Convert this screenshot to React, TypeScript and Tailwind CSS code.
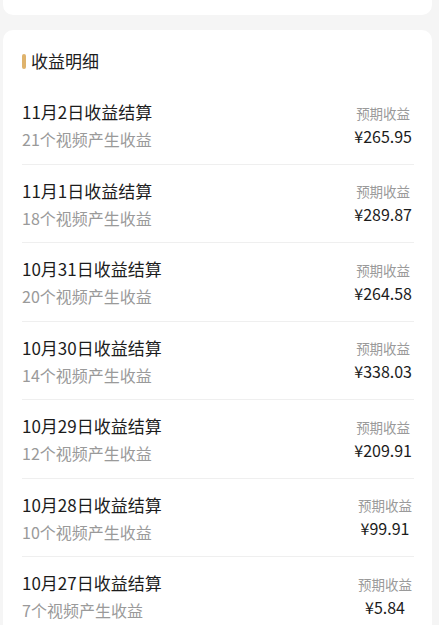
import React from 'react';

interface Settlement {
  date: string;
  videos: number;
  amount: string;
}

const ROWS: Settlement[] = [
  { date: '11月2日', videos: 21, amount: '265.95' },
  { date: '11月1日', videos: 18, amount: '289.87' },
  { date: '10月31日', videos: 20, amount: '264.58' },
  { date: '10月30日', videos: 14, amount: '338.03' },
  { date: '10月29日', videos: 12, amount: '209.91' },
  { date: '10月28日', videos: 10, amount: '99.91' },
  { date: '10月27日', videos: 7, amount: '5.84' },
];

const SettlementRow: React.FC<{ row: Settlement; last: boolean }> = ({ row, last }) => (
  <div className={`flex items-center justify-between pt-[14px] pb-[13.5px] ${last ? '' : 'border-b border-[#efefef]'}`}>
    <div className="flex flex-col gap-[4px]">
      <span className="text-[17px] leading-[24px] text-[#1c1c1c]">{row.date}收益结算</span>
      <span className="text-[16px] leading-[22px] text-[#9a9a9a]">{row.videos}个视频产生收益</span>
    </div>
    <div className="flex flex-col items-center gap-[3px] pr-[2px]">
      <span className="text-[13.5px] leading-[18px] text-[#9a9a9a]">预期收益</span>
      <span className="text-[16px] leading-[22px] text-[#1c1c1c]">¥{row.amount}</span>
    </div>
  </div>
);

export default function App() {
  return (
    <div
      className="w-[439px] h-[625px] overflow-hidden bg-[#f5f5f5] pr-[7px] pl-[3px]"
      style={{ fontFamily: '"Noto Sans CJK SC", "Noto Sans", sans-serif' }}
    >
      <div className="h-[15px] bg-white rounded-b-[10px]" />
      <div className="mt-[15px] bg-white rounded-[10px] px-[19px] pr-[18px]">
        <div className="flex items-center gap-[5px] pt-[20px] pb-[14px]">
          <span className="w-[4px] h-[15px] rounded-full bg-[#dfb36c]" />
          <span className="text-[17px] leading-[22px] text-[#1c1c1c]">收益明细</span>
        </div>
        {ROWS.map((row, i) => (
          <SettlementRow key={row.date} row={row} last={i === ROWS.length - 1} />
        ))}
      </div>
    </div>
  );
}
